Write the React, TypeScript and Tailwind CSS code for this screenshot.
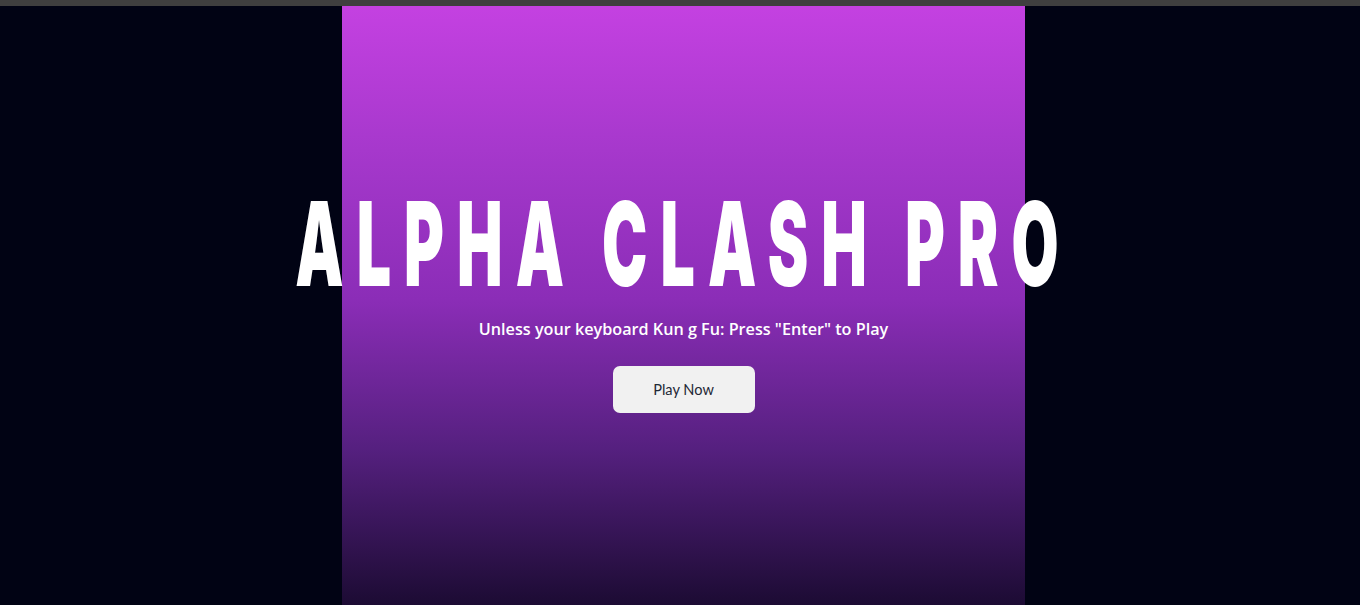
import React from "react";

export default function App() {
  return (
    <div className="w-[1360px] h-[605px] overflow-hidden flex flex-col bg-[#010314]">
      <div className="h-[6px] bg-[#3f3f3f] shrink-0" />
      <div className="flex-1 flex justify-center pl-[7px]">
        <div className="w-[683px] h-full bg-[linear-gradient(to_bottom,#c441e1_0%,#a638cc_24%,#8b2db7_49%,#55207f_74%,#1c0b33_100%)] flex flex-col items-center">
          <div className="h-[173px] shrink-0" />
          <div className="w-[1360px] flex justify-center shrink-0">
            <h1
              className="text-white text-[117px] leading-[130px] font-black tracking-[25px] scale-x-[0.52] whitespace-nowrap"
              style={{ fontFamily: "Inter, 'DejaVu Sans', sans-serif" }}
            >
              ALPHA CLASH PRO
            </h1>
          </div>
          <p
            className="mt-[8px] text-white text-[16.2px] leading-[24px] font-semibold"
            style={{ fontFamily: "'Open Sans', 'Noto Sans', sans-serif" }}
          >
            Unless your keyboard Kun g Fu: Press "Enter" to Play
          </p>
          <button
            className="mt-[25px] w-[142px] h-[47px] shrink-0 rounded-[7px] bg-[#f1f1f1] text-[#1f2937] text-[14.6px]"
            style={{ fontFamily: "Lato, 'Noto Sans', sans-serif" }}
          >
            Play Now
          </button>
        </div>
      </div>
    </div>
  );
}
